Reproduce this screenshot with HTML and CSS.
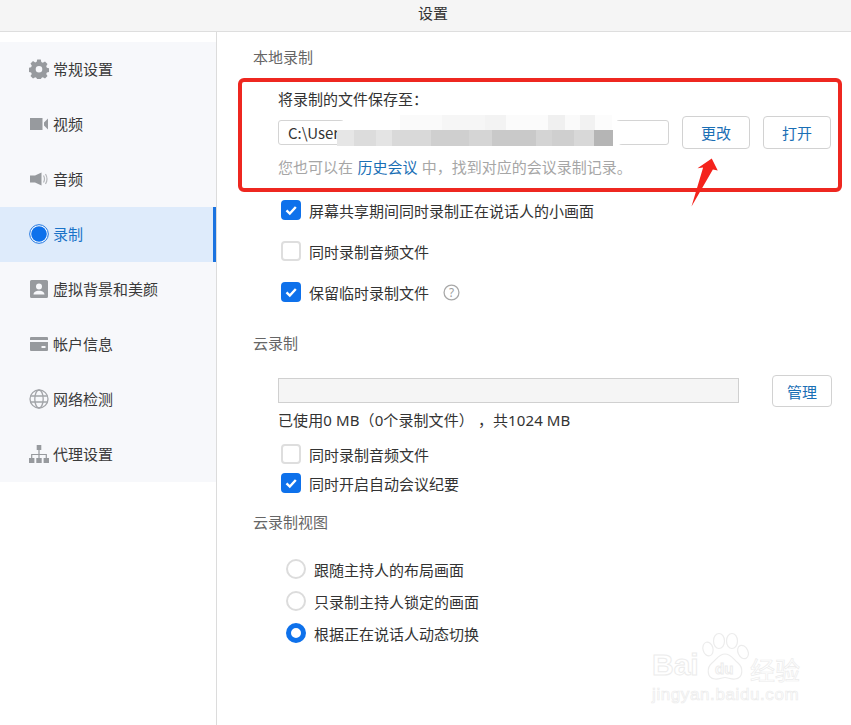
FILE: index.html
```html
<!DOCTYPE html>
<html lang="zh-CN">
<head>
<meta charset="utf-8">
<title>设置</title>
<link rel="stylesheet" href="styles.css">
</head>
<body>
<div class="app">
  <header class="titlebar">设置</header>
  <div class="body">
    <nav class="sidebar">
      <div class="nav-list">
        <div class="nav-item"><svg class="nav-icon" viewBox="0 0 20 20"><path fill="#979a9e" fill-rule="evenodd" d="M8.200 0.600h3.600l.5 2.500 1.500.7 2.200-1.300 2.500 2.500-1.300 2.200.7 1.600 2.500.5v3.500l-2.500.6-.7 1.500 1.300 2.200-2.500 2.500-2.200-1.300-1.500.7-.5 2.500H8.200l-.5-2.500-1.500-.7-2.200 1.300-2.500-2.500 1.300-2.200-.7-1.500-2.500-.6V8.900l2.500-.6.7-1.500-1.300-2.200 2.500-2.500 2.200 1.300 1.500-.7zM10 7a3.300 3.300 0 1 0 0 6.600a3.300 3.300 0 0 0 0-6.600z"/></svg>常规设置</div>
        <div class="nav-item"><svg class="nav-icon" viewBox="0 0 20 20"><path fill="#979a9e" d="M1 4h12.500v12H1zM15 8.500 19 4.500v11l-4-4z"/></svg>视频</div>
        <div class="nav-item"><svg class="nav-icon" viewBox="0 0 20 20"><path fill="#979a9e" d="M1 6.500h5L12.500 3.500v13L6 13.500H1z"/><path fill="none" stroke="#b5b7ba" stroke-width="1.200" d="M14.500 6.500q2 3.500 0 7M16.500 5q3 5 0 10"/></svg>音频</div>
        <div class="nav-item active"><svg class="nav-icon" viewBox="0 0 20 20"><circle cx="10" cy="10" r="9.300" fill="#fff" stroke="#1a73e0" stroke-width="1"/><circle cx="10" cy="10" r="7.800" fill="#0e71eb"/></svg>录制</div>
        <div class="nav-item"><svg class="nav-icon" viewBox="0 0 20 20"><path fill="#979a9e" fill-rule="evenodd" d="M2.500 1h15A1.500 1.500 0 0 1 19 2.500v15a1.500 1.500 0 0 1-1.500 1.500h-15A1.500 1.500 0 0 1 1 17.500v-15A1.500 1.500 0 0 1 2.500 1zM10 4.500a3 3 0 1 0 0 6 3 3 0 0 0 0-6zM4.500 15.500h11c0-2.500-2.500-3.800-5.500-3.800s-5.500 1.300-5.500 3.800z"/></svg>虚拟背景和美颜</div>
        <div class="nav-item"><svg class="nav-icon" viewBox="0 0 20 20"><path fill="#979a9e" fill-rule="evenodd" d="M2 3h16a1 1 0 0 1 1 1v2H1V4a1 1 0 0 1 1-1zM1 8h18v8a1 1 0 0 1-1 1H2a1 1 0 0 1-1-1zM12.500 12v2h4v-2z"/></svg>帐户信息</div>
        <div class="nav-item"><svg class="nav-icon" viewBox="0 0 20 20"><g fill="none" stroke="#a3a5a9" stroke-width="1.300"><circle cx="10" cy="10" r="9"/><ellipse cx="10" cy="10" rx="4.200" ry="9"/><path d="M1.500 7h17M1.500 13h17"/></g></svg>网络检测</div>
        <div class="nav-item"><svg class="nav-icon" viewBox="0 0 20 20"><path fill="#979a9e" d="M7.700 1h4.600v5H7.700zM0 14h5.400v5H0zM7.300 14h5.400v5H7.300zM14.600 14H20v5h-5.400z"/><path fill="none" stroke="#979a9e" stroke-width="1.200" d="M10 6v8M2.700 14v-3.500h14.600V14"/></svg>代理设置</div>
      </div>
    </nav>
    <main class="content">
      <h2 class="section-title first">本地录制</h2>
      <div class="local">
        <div class="save-label">将录制的文件保存至：</div>
        <div class="path-row">
          <div class="path-input">C:\User</div>
          <button class="btn">更改</button>
          <button class="btn btn-open">打开</button>
        </div>
        <div class="hint">您也可以在 <span class="link">历史会议</span> 中，找到对应的会议录制记录。</div>
      </div>
      <div class="checks">
        <label class="check on"><span class="box"><svg viewBox="0 0 20 20"><path d="M5.500 10.300 8.800 13.500 14.800 7" fill="none" stroke="#fff" stroke-width="2.400"/></svg></span>屏幕共享期间同时录制正在说话人的小画面</label>
        <label class="check"><span class="box"></span>同时录制音频文件</label>
        <label class="check on"><span class="box"><svg viewBox="0 0 20 20"><path d="M5.500 10.300 8.800 13.500 14.800 7" fill="none" stroke="#fff" stroke-width="2.400"/></svg></span>保留临时录制文件<svg class="help" viewBox="0 0 16 16"><circle cx="8" cy="8" r="7" fill="none" stroke="#a8a8a8" stroke-width="1.200"/><text x="8" y="11.800" text-anchor="middle" class="help-mark">?</text></svg></label>
      </div>
      <h2 class="section-title cloud">云录制</h2>
      <div class="usage-row">
        <div class="usage-bar"></div>
        <button class="btn btn-manage">管理</button>
      </div>
      <div class="usage-text">已使用0 MB（0个录制文件） ，共1024 MB</div>
      <div class="checks tight">
        <label class="check"><span class="box"></span>同时录制音频文件</label>
        <label class="check on"><span class="box"><svg viewBox="0 0 20 20"><path d="M5.500 10.300 8.800 13.500 14.800 7" fill="none" stroke="#fff" stroke-width="2.400"/></svg></span>同时开启自动会议纪要</label>
      </div>
      <h2 class="section-title view">云录制视图</h2>
      <div class="radios">
        <label class="radio"><span class="dot"></span>跟随主持人的布局画面</label>
        <label class="radio"><span class="dot"></span>只录制主持人锁定的画面</label>
        <label class="radio on"><span class="dot"></span>根据正在说话人动态切换</label>
      </div>
    </main>
  </div>

  <div class="redact"><div class="mosaic-top"></div><div class="mosaic"></div></div>
  <div class="red-box"></div>
  <svg class="arrow" viewBox="0 0 40 70"><path fill="#f4231c" d="M29 1 37 17 30.500 15.500 2 65 17.500 13 10 14z"/></svg>

  <div class="watermark">
    <svg class="paw" viewBox="0 0 50 50"><g fill="none" stroke="#ececec" stroke-width="1.200"><ellipse cx="8" cy="17" rx="5" ry="7" transform="rotate(-15 8 17)"/><ellipse cx="19" cy="9" rx="5.500" ry="7.500"/><ellipse cx="32" cy="9" rx="5.500" ry="7.500"/><ellipse cx="43" cy="20" rx="5" ry="7" transform="rotate(-25 43 20)"/><path d="M25 22c-6 0-8 5-13 9-5 4-6 15 3 16 4 .5 7-1.500 10-1.500s6 2 10 1.500c9-1 8-12 3-16-5-4-7-9-13-9z"/></g></svg>
    <span class="wm-bai">Bai</span><span class="wm-du">du</span><span class="wm-jy">经验</span>
    <span class="wm-url">jingyan.baidu.com</span>
  </div>
</div>
</body>
</html>
```
FILE: styles.css
```css
* { box-sizing: border-box; }
html, body { margin: 0; padding: 0; }
body {
  width: 851px;
  height: 725px;
  overflow: hidden;
  background: #fff;
  color: #333;
  font-family: "Noto Sans CJK SC", "Noto Sans", sans-serif;
  font-size: 15px;
}
.app { position: relative; width: 851px; height: 725px; overflow: hidden; }
.titlebar {
  height: 32px;
  background: #f5f5f5;
  border-bottom: 1px solid #dedede;
  padding-left: 15px;
  text-align: center;
  font-size: 15px;
  line-height: 26px;
  color: #333;
}
.body { display: flex; height: 693px; }
.sidebar {
  width: 217px;
  flex: none;
  padding-top: 10px;
  border-right: 1px solid #dcdcdc;
}
.nav-list { background: #f7f8fb; }
.nav-item {
  display: flex;
  align-items: center;
  height: 55px;
  padding: 0 0 2px 29px;
  font-size: 15px;
  color: #3a3a3a;
}
.nav-item.active {
  background: #deebfb;
  color: #1a73c8;
  border-right: 3px solid #1a73e0;
}
.nav-icon { width: 20px; height: 20px; margin-right: 4px; flex: none; }
.content { flex: 1; padding-left: 36px; position: relative; }
.section-title {
  margin: 0;
  font-size: 15px;
  font-weight: 400;
  color: #666;
  line-height: 22px;
}
.section-title.first { margin-top: 14px; }
.section-title.cloud { margin-top: 30px; }
.section-title.view { margin-top: 18px; }
.local { padding-left: 25px; margin-top: 21px; }
.save-label { font-size: 15px; line-height: 20px; color: #333; }
.path-row { display: flex; align-items: center; margin-top: 7px; height: 33px; }
.path-input {
  width: 391px;
  height: 25px;
  border: 1px solid #d4d4d4;
  border-radius: 3px;
  padding-left: 9px;
  font-size: 15px;
  line-height: 23px;
  color: #333;
}
.btn {
  width: 68px;
  height: 33px;
  margin-left: 13px;
  padding: 0;
  background: #fff;
  border: 1px solid #d2d2d2;
  border-radius: 4px;
  color: #1a6fb5;
  font-family: inherit;
  font-size: 15px;
}
.hint { margin-top: 7px; line-height: 22px; font-size: 15px; color: #a6a6a6; }
.link { color: #1a6fb5; margin: 0 1px; }
.checks { padding-left: 28px; margin-top: 22px; display: flex; flex-direction: column; gap: 21px; }
.check { display: flex; align-items: center; height: 20px; font-size: 15px; color: #333; }
.box {
  width: 20px;
  height: 20px;
  margin-right: 8px;
  flex: none;
  border: 2px solid #dedede;
  border-radius: 4px;
  background: #fff;
}
.box svg { display: block; width: 20px; height: 20px; }
.check.on .box { background: #0e71eb; border: 0; }
.help { width: 17px; height: 17px; margin-left: 14px; }
.help-mark { font-size: 11px; fill: #a0a0a0; font-family: "Noto Sans", sans-serif; }
.usage-row { display: flex; align-items: center; padding-left: 25px; margin-top: 21px; height: 32px; }
.usage-bar { width: 461px; height: 25px; margin-bottom: 2px; background: #f5f5f5; border: 1px solid #d0d0d0; }
.btn.btn-manage { width: 60px; height: 32px; margin-left: 33px; }
.usage-text { padding-left: 25px; margin-top: 2px; line-height: 22px; font-size: 15px; color: #333; letter-spacing: .1px; font-family: "Noto Sans", "Noto Sans CJK SC", sans-serif; }
.checks.tight { margin-top: 13px; gap: 9px; }
.radios { padding-left: 33px; margin-top: 26px; display: flex; flex-direction: column; gap: 12px; }
.radio { display: flex; align-items: center; height: 20px; font-size: 15px; color: #333; }
.dot {
  width: 20px;
  height: 20px;
  margin-right: 8px;
  flex: none;
  border: 2px solid #dcdcdc;
  border-radius: 50%;
  background: #fff;
}
.radio.on .dot { border: 5px solid #0e71eb; }

.redact {
  position: absolute;
  left: 340px;
  top: 115px;
  width: 280px;
  height: 40px;
  background: #fff;
  border-radius: 14px;
  box-shadow: 0 0 3px #fff;
}
.mosaic-top {
  position: absolute;
  left: 60px;
  top: 0;
  width: 212px;
  height: 15px;
  background: linear-gradient(90deg, #fafafa 0 20%, #f6f6f6 20% 40%, #f3f3f3 40% 50%, #fbfbfb 50% 70%, #f0f0f0 70% 78%, #fafafa 78% 85%, #f2f2f2 85% 92%, #fcfcfc 92%);
}
.mosaic {
  position: absolute;
  left: -3px;
  top: 15px;
  width: 276px;
  height: 16px;
  background: linear-gradient(90deg, #e6e6e6 0 6%, #dcdcdc 6% 14%, #e4e4e4 14% 20%, #d9d9d9 20% 34%, #cfcfcf 34% 48%, #d5d5d5 48% 56%, #c9c9c9 56% 72%, #d4d4d4 72% 78%, #cfcfcf 78% 86%, #d8d8d8 86% 93%, #b5b5b5 93%);
}
.red-box {
  position: absolute;
  left: 238px;
  top: 78px;
  width: 604px;
  height: 114px;
  border: 4px solid #ee2720;
  border-radius: 6px;
}
.arrow { position: absolute; left: 690px; top: 151px; width: 30px; height: 66px; }

.watermark {
  position: absolute;
  left: 650px;
  top: 632px;
  width: 160px;
  height: 76px;
  color: transparent;
  -webkit-text-stroke: 1px #ececec;
  font-family: "Liberation Sans", sans-serif;
}
.paw { position: absolute; left: 50px; top: 0; width: 50px; height: 50px; }
.wm-bai { position: absolute; left: 2px; top: 16px; font-size: 30px; line-height: 34px; font-weight: 700; }
.wm-du { position: absolute; left: 65px; top: 28px; font-size: 15px; line-height: 18px; font-weight: 700; }
.wm-jy { position: absolute; left: 100px; top: 22px; font-size: 25px; line-height: 30px; font-family: "Noto Sans CJK SC", sans-serif; -webkit-text-stroke-width: .7px; }
.wm-url { position: absolute; left: 2px; top: 53px; font-size: 17px; line-height: 20px; letter-spacing: .6px; -webkit-text-stroke-width: .7px; }
```
